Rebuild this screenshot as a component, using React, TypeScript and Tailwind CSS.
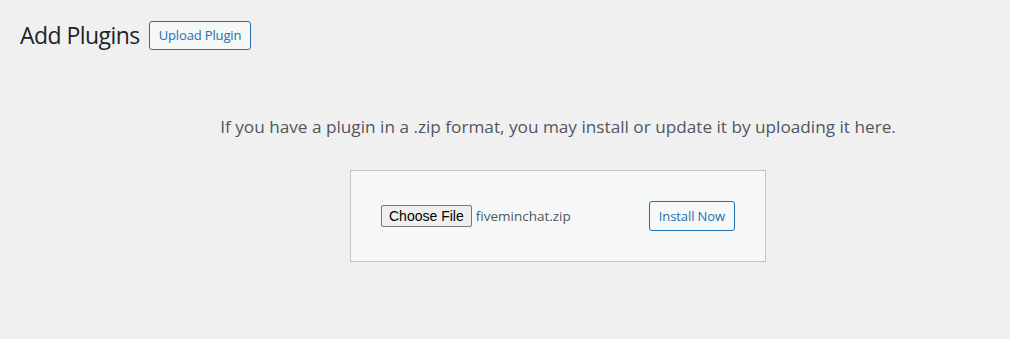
import React from "react";

const sans = "font-['Segoe_UI','Open_Sans','Noto_Sans',sans-serif]";

export default function App() {
  return (
    <div className={`h-[339px] w-[1010px] overflow-hidden bg-[#f0f0f1] text-[#1d2327] ${sans}`}>
      {/* Page header */}
      <div className="flex items-center gap-[9px] pl-[20px] pt-[20px]">
        <h1 className="text-[23px] font-normal leading-[30px] tracking-[-0.55px]">Add Plugins</h1>
        <button className="h-[29px] rounded-[3px] border border-[#2271b1] bg-[#f6f7f7] px-[9px] text-[13px] leading-[27px] tracking-[-0.15px] text-[#2271b1]">
          Upload Plugin
        </button>
      </div>

      {/* Upload section */}
      <div className="ml-[20px] w-[1076px] text-center">
        <p className="mt-[63px] text-[17.2px] leading-[27px] text-[#50575e]">
          If you have a plugin in a .zip format, you may install or update it by uploading it here.
        </p>
        <div className="mt-[30px] inline-flex w-[416px] items-center justify-between border border-[#c3c4c7] bg-[#f6f7f7] p-[30px]">
          <div className="flex items-center gap-[4px]">
            <span className="flex h-[22px] items-center rounded-[2px] border border-[#767676] bg-[#efefef] px-[7px] font-['Liberation_Sans',Arial,sans-serif] text-[14px] text-black">
              Choose File
            </span>
            <span className="text-[13.5px] text-[#50575e]">fiveminchat.zip</span>
          </div>
          <button className="h-[30px] rounded-[3px] border border-[#2271b1] bg-[#f6f7f7] px-[9px] text-[13px] leading-[28px] tracking-[-0.1px] text-[#2271b1]">
            Install Now
          </button>
        </div>
      </div>
    </div>
  );
}
